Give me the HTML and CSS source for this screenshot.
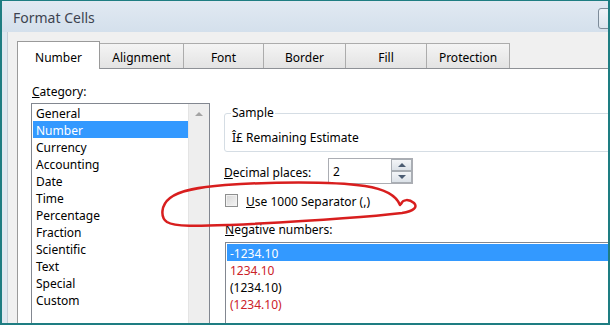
FILE: index.html
```html
<!DOCTYPE html>
<html lang="en">
<head>
    <meta charset="UTF-8">
    <title>Format Cells</title>
    <link rel="stylesheet" href="styles.css">
</head>
<body>
<div class="window">
    <div class="title-bar">
        <span class="title">Format Cells</span>
        <span class="close-btn"></span>
    </div>
    <div class="client">
        <ul class="tabs">
            <li class="tab selected tab-number">Number</li>
            <li class="tab tab-alignment">Alignment</li>
            <li class="tab tab-font">Font</li>
            <li class="tab tab-border">Border</li>
            <li class="tab tab-fill">Fill</li>
            <li class="tab tab-protection">Protection</li>
        </ul>
        <div class="tab-page">
            <div class="col-left">
                <div class="field-label"><u>C</u>ategory:</div>
                <div class="listbox category-list">
                    <ul class="list-items">
                        <li>General</li>
                        <li class="active">Number</li>
                        <li>Currency</li>
                        <li>Accounting</li>
                        <li>Date</li>
                        <li>Time</li>
                        <li>Percentage</li>
                        <li>Fraction</li>
                        <li>Scientific</li>
                        <li>Text</li>
                        <li>Special</li>
                        <li>Custom</li>
                    </ul>
                    <div class="scrollbar"><span class="arrow-up"></span></div>
                </div>
            </div>
            <div class="col-right">
                <fieldset class="sample">
                    <legend>Sample</legend>
                    <div class="sample-text">Î£ Remaining Estimate</div>
                </fieldset>
                <div class="decimal-row">
                    <span class="decimal-label"><u>D</u>ecimal places:</span>
                    <div class="spin">
                        <span class="spin-value">2</span>
                        <div class="spin-buttons">
                            <span class="spin-btn"><i class="tri-up"></i></span>
                            <span class="spin-btn"><i class="tri-down"></i></span>
                        </div>
                    </div>
                </div>
                <div class="check-row">
                    <span class="checkbox"></span>
                    <span class="check-text"><u>U</u>se 1000 Separator (,)</span>
                </div>
                <div class="field-label neg-label"><u>N</u>egative numbers:</div>
                <div class="listbox neg-list">
                    <ul class="list-items">
                        <li class="active">-1234.10</li>
                        <li class="red">1234.10</li>
                        <li>(1234.10)</li>
                        <li class="red">(1234.10)</li>
                    </ul>
                </div>
            </div>
        </div>
    </div>
    <!-- red pen mark drawn over the dialog -->
    <svg class="pen-mark" width="610" height="325" viewBox="0 0 610 325">
        <path d="M401 204 C403 199 409 199 414 203 C418 207 414 211 402 213 C360 218 290 222 230 225 C200 226 175 227 167 222 C160 217 161 205 170 198 C180 190 200 187 225 185 C270 182 330 181 365 186 C385 189 396 195 400 205"
              fill="none" stroke="#d81e1e" stroke-width="2.5" stroke-linecap="round" stroke-linejoin="round"/>
    </svg>
</div>
</body>
</html>
```

FILE: styles.css
```css
*{
    margin: 0;
    padding: 0;
    box-sizing: border-box;
}
body{
    font-family: "Noto Sans", "Open Sans", sans-serif;
    font-size: 12px;
    color: #000;
    overflow: hidden;
}
.window{
    position: relative;
    width: 610px;
    height: 325px;
    border: 2px solid #1e7d82;
    border-top-width: 1px;
    background: #dfe8f0;
    display: flex;
    flex-direction: column;
    overflow: hidden;
}
.title-bar{
    height: 31px;
    flex: none;
    display: flex;
    justify-content: space-between;
    align-items: flex-start;
    background: linear-gradient(#e1e9f2, #d4e0ec);
}
.title{
    font-size: 14px;
    line-height: 20px;
    color: #3d4350;
    padding: 7px 0 0 11px;
}
.close-btn{
    width: 40px;
    height: 21px;
    margin-top: 7px;
    margin-right: -30px;
    border: 1px solid #7d8b99;
    border-radius: 3px;
    background: linear-gradient(#eef3f8, #dae4ee);
}
.client{
    flex: 1;
    margin-left: 5px;
    border-left: 1px solid #c5cdd6;
    background: #f0f0f0;
    padding: 9px 0 0 9px;
    display: flex;
    flex-direction: column;
}
.tabs{
    list-style: none;
    display: flex;
    align-items: flex-end;
    flex: none;
}
.tab{
    height: 25px;
    padding-top: 3px;
    line-height: 21px;
    text-align: center;
    border: 1px solid #acacac;
    border-bottom: none;
    margin-left: -1px;
    background: linear-gradient(#f4f4f4, #e3e3e3);
}
.tab.selected{
    position: relative;
    z-index: 1;
    height: 28px;
    padding-top: 5px;
    margin-left: 0;
    margin-bottom: -1px;
    background: #fff;
    border-color: #9a9a9a;
}
.tab-number{ width: 83px; }
.tab-alignment{ width: 85px; }
.tab-font{ width: 81px; }
.tab-border{ width: 83px; }
.tab-fill{ width: 82px; }
.tab-protection{ width: 84px; }

.tab-page{
    flex: 1;
    background: #fff;
    border-top: 1px solid #8e9196;
    border-left: 1px solid #9a9a9a;
    padding: 13px 0 0 13px;
    display: flex;
}
.field-label{
    height: 17px;
    line-height: 17px;
    padding: 1px 0 0 1px;
}
.col-left{
    width: 179px;
    flex: none;
}
.listbox{
    border: 1px solid #828790;
    background: #fff;
}
.list-items{
    list-style: none;
    padding: 0 0 0 1px;
}
.list-items>li{
    height: 17px;
    line-height: 17px;
    padding: 1px 0 0 3px;
    white-space: nowrap;
}
.list-items>li.active{
    background: #3399ff;
    color: #fff;
}
.list-items>li.red{
    color: #cc2229;
}
.category-list{
    margin-top: 4px;
    height: 240px;
    display: flex;
}
.category-list .list-items{
    flex: 1;
}
.scrollbar{
    width: 21px;
    flex: none;
    background: #eeeeee;
    border-left: 1px solid #e4e4e4;
    display: flex;
    justify-content: center;
    padding-top: 8px;
}
.arrow-up{
    width: 0;
    height: 0;
    border-left: 4px solid transparent;
    border-right: 4px solid transparent;
    border-bottom: 4px solid #a4a4a4;
}

.col-right{
    width: 420px;
    flex: none;
    margin-left: 14px;
}
.sample{
    margin-top: 23px;
    border: 1px solid #d5dde4;
    border-radius: 3px;
    padding: 0 6px 6px 6px;
}
.sample legend{
    line-height: 16px;
    padding: 0 1px;
}
.sample-text{
    margin-top: 7px;
    height: 17px;
    line-height: 17px;
    padding: 1px 0 0 1px;
}
.decimal-row{
    margin-top: 6px;
    display: flex;
    align-items: center;
    height: 26px;
}
.decimal-label{
    width: 104px;
    line-height: 17px;
    padding-top: 2px;
}
.spin{
    width: 85px;
    height: 26px;
    border: 1px solid #abadb3;
    display: flex;
}
.spin-value{
    flex: 1;
    padding: 1px 0 0 4px;
    line-height: 24px;
}
.spin-buttons{
    width: 21px;
    display: flex;
    flex-direction: column;
}
.spin-btn{
    height: 12px;
    border: 1px solid #a9aeb4;
    background: linear-gradient(#f3f5f7, #dce2e8);
    display: flex;
    align-items: center;
    justify-content: center;
}
.tri-up{
    border-left: 4px solid transparent;
    border-right: 4px solid transparent;
    border-bottom: 4px solid #4b5c72;
}
.tri-down{
    border-left: 4px solid transparent;
    border-right: 4px solid transparent;
    border-top: 4px solid #4b5c72;
}
.check-row{
    margin-top: 8px;
    display: flex;
    align-items: center;
    gap: 8px;
    height: 17px;
    padding-left: 1px;
}
.check-text{
    line-height: 17px;
    padding-top: 2px;
}
.checkbox{
    width: 13px;
    height: 13px;
    border: 1px solid #8e8f8f;
    background: linear-gradient(135deg, #d6d6d6, #f5f5f5);
    box-shadow: inset 0 0 0 1px #f2f2f2;
}
.neg-label{
    margin-top: 11px;
}
.neg-list{
    margin-top: 5px;
    margin-left: 1px;
    height: 120px;
    padding-top: 1px;
}
.pen-mark{
    position: absolute;
    left: -2px;
    top: -1px;
    pointer-events: none;
    z-index: 5;
}
```
